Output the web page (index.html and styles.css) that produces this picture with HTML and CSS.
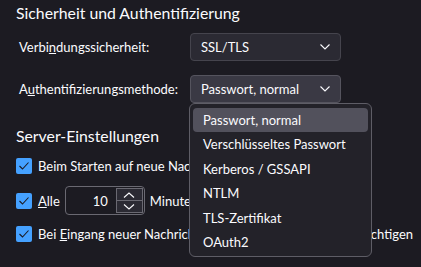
FILE: index.html
```html
<!DOCTYPE html>
<html lang="de">
<head>
    <meta charset="UTF-8">
    <title>Server-Einstellungen</title>
    <link rel="stylesheet" href="styles.css">
</head>
<body>
    <section class="group">
        <h2>Sicherheit und Authentifizierung</h2>
        <div class="form-grid">
            <label class="field-label">Verbi<u>n</u>dungssicherheit:</label>
            <div class="select">
                <span>SSL/TLS</span>
                <svg class="chevron" width="12" height="8" viewBox="0 0 12 8"><path d="M1.5 1.5 L6 6 L10.5 1.5" fill="none" stroke="#fbfbfe" stroke-width="1.1"/></svg>
            </div>
            <label class="field-label">A<u>u</u>thentifizierungsmethode:</label>
            <div class="select open">
                <span>Passwort, normal</span>
                <svg class="chevron" width="12" height="8" viewBox="0 0 12 8"><path d="M1.5 1.5 L6 6 L10.5 1.5" fill="none" stroke="#fbfbfe" stroke-width="1.1"/></svg>
            </div>
        </div>
    </section>

    <section class="group">
        <h2>Server-Einstellungen</h2>
        <div class="check-row">
            <span class="checkbox"><svg width="16" height="16" viewBox="0 0 16 16"><path d="M3.5 8 L6.5 11 L12.5 4.5" fill="none" stroke="#1c1b22" stroke-width="1.1"/></svg></span>
            <span>Beim Starten auf neue Nachrichten prüfen</span>
        </div>
        <div class="check-row spin-row">
            <span class="checkbox"><svg width="16" height="16" viewBox="0 0 16 16"><path d="M3.5 8 L6.5 11 L12.5 4.5" fill="none" stroke="#1c1b22" stroke-width="1.1"/></svg></span>
            <span><u>A</u>lle</span>
            <div class="number-input">
                <span class="number-value">10</span>
                <div class="spinner">
                    <span class="spin-btn"><svg width="14" height="8" viewBox="0 0 14 8"><path d="M2 6.5 L7 2 L12 6.5" fill="none" stroke="#fbfbfe" stroke-width="1.1"/></svg></span>
                    <span class="spin-btn"><svg width="14" height="8" viewBox="0 0 14 8"><path d="M2 1.5 L7 6 L12 1.5" fill="none" stroke="#fbfbfe" stroke-width="1.1"/></svg></span>
                </div>
            </div>
            <span>Minuten auf neue Nachrichten prüfen</span>
        </div>
        <div class="check-row">
            <span class="checkbox"><svg width="16" height="16" viewBox="0 0 16 16"><path d="M3.5 8 L6.5 11 L12.5 4.5" fill="none" stroke="#1c1b22" stroke-width="1.1"/></svg></span>
            <span>Bei <u>E</u>ingang neuer Nachrichten sofort vom Server benachrichtigen</span>
        </div>
        <p class="trailing">Wenn eine Nachricht gelöscht wird:</p>
    </section>

    <ul class="popup">
        <li class="selected">Passwort, normal</li>
        <li>Verschlüsseltes Passwort</li>
        <li>Kerberos / GSSAPI</li>
        <li>NTLM</li>
        <li>TLS-Zertifikat</li>
        <li>OAuth2</li>
    </ul>
</body>
</html>
```

FILE: styles.css
```css
:root {
    --bg-color: #1c1b22;
    --text-color: #fbfbfe;
    --field-bg: #2b2a33;
    --field-hover: #3a3944;
    --border-color: #45444d;
    --accent-color: #45a1ff;
}

* {
    margin: 0;
    padding: 0;
    box-sizing: border-box;
}

body {
    background-color: var(--bg-color);
    color: var(--text-color);
    font-family: 'Lato', 'Noto Sans', sans-serif;
    font-size: 13px;
    padding: 3px 16px 0;
    overflow: hidden;
    height: 267px;
}

h2 {
    font-size: 15.8px;
    font-weight: 400;
    line-height: 20px;
}

.form-grid {
    display: grid;
    grid-template-columns: 171px 151px;
    row-gap: 14px;
    align-items: center;
    margin-top: 10px;
    padding-left: 3px;
}

.select {
    display: flex;
    align-items: center;
    justify-content: space-between;
    height: 28px;
    padding: 0 9px 0 10px;
    background-color: var(--field-bg);
    border: 1px solid var(--border-color);
    border-radius: 4px;
}

.select.open {
    background-color: var(--field-hover);
    border-color: #55545e;
}

.group + .group {
    margin-top: 23px;
}

.check-row {
    display: flex;
    align-items: center;
    gap: 6px;
    margin-top: 12px;
    white-space: nowrap;
}

.spin-row {
    margin-top: 12px;
    gap: 5px;
}

.spin-row + .check-row {
    margin-top: 11px;
}

.checkbox {
    flex: none;
    width: 16px;
    height: 16px;
    border-radius: 2px;
    background-color: var(--accent-color);
    display: flex;
}

.spin-row .checkbox {
    margin-right: 1px;
}

.number-input {
    display: flex;
    align-items: stretch;
    flex: none;
    width: 80px;
    height: 29px;
    border: 1px solid #6a6972;
    border-radius: 4px;
    background-color: var(--bg-color);
}

.number-value {
    flex: 1;
    text-align: right;
    align-self: center;
    padding-right: 8px;
}

.spinner {
    display: flex;
    flex-direction: column;
    width: 28px;
    padding: 1px 1px 1px 0;
}

.spin-btn {
    flex: 1;
    display: flex;
    align-items: center;
    justify-content: center;
    background-color: var(--field-bg);
    border: 1px solid #6a6972;
}

.spin-btn + .spin-btn {
    border-top: none;
}

.trailing {
    margin-top: 22px;
    padding-left: 14px;
}

.popup {
    position: absolute;
    left: 189px;
    top: 103px;
    width: 183px;
    height: 154px;
    list-style: none;
    padding: 4px 3px;
    background-color: #232229;
    border: 1px solid #5e5d66;
    border-radius: 6px;
}

.popup li {
    height: 24.4px;
    line-height: 24px;
    padding-left: 10px;
    border-radius: 4px;
}

.popup li.selected {
    background-color: #52515c;
}
```
